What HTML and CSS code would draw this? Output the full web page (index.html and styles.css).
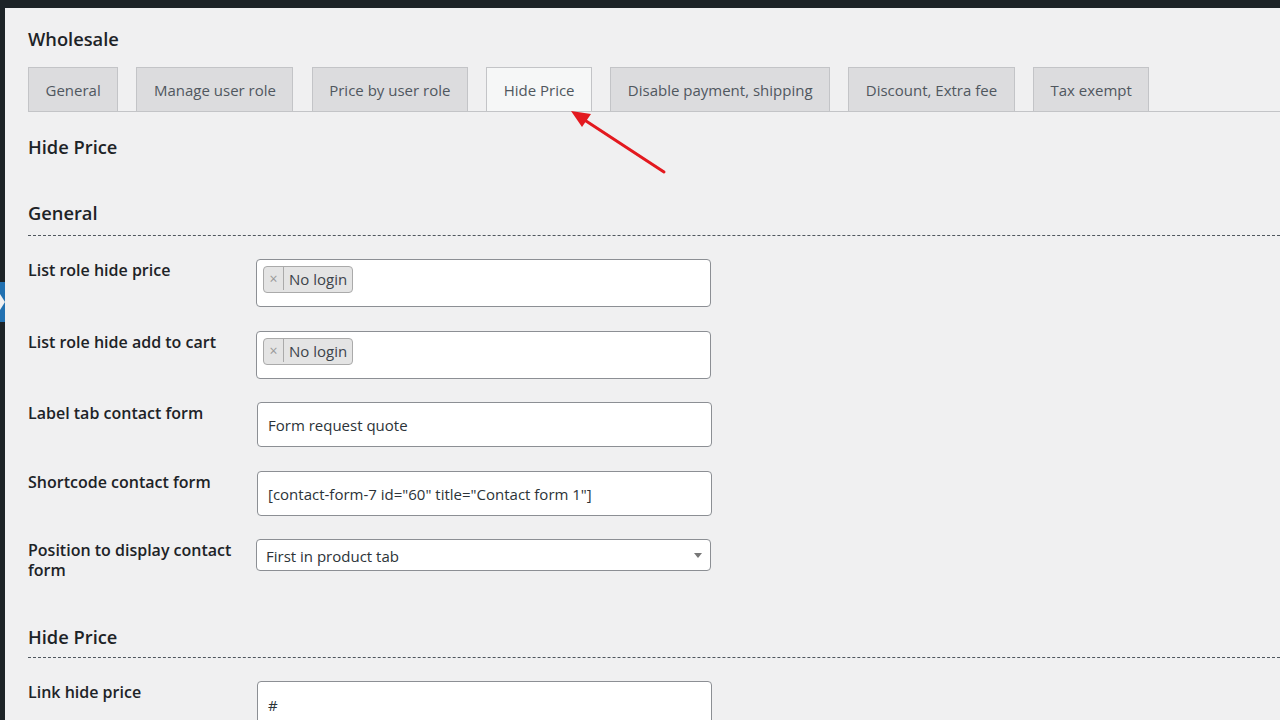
FILE: index.html
```html
<!DOCTYPE html>
<html>
<head>
<meta charset="utf-8">
<link rel="stylesheet" href="styles.css">
</head>
<body>
<div class="topbar"></div>
<div class="layout">
  <div class="sidebar">
    <div class="side-dark side-top"></div>
    <div class="side-current"><span class="notch"></span></div>
    <div class="side-dark side-rest"></div>
  </div>
  <main class="main">
    <h1 class="page-title">Wholesale</h1>
    <nav class="tabs">
      <a class="tab">General</a>
      <a class="tab">Manage user role</a>
      <a class="tab">Price by user role</a>
      <a class="tab tab-active">Hide Price</a>
      <a class="tab">Disable payment, shipping</a>
      <a class="tab">Discount, Extra fee</a>
      <a class="tab">Tax exempt</a>
    </nav>
    <h2 class="section-title">Hide Price</h2>

    <h3 class="group-title">General</h3>
    <div class="row">
      <div class="label">List role hide price</div>
      <div class="tagbox"><span class="chip"><span class="chip-x">×</span><span class="chip-text">No login</span></span></div>
    </div>
    <div class="row">
      <div class="label">List role hide add to cart</div>
      <div class="tagbox"><span class="chip"><span class="chip-x">×</span><span class="chip-text">No login</span></span></div>
    </div>
    <div class="row row-tight">
      <div class="label">Label tab contact form</div>
      <div class="textbox">Form request quote</div>
    </div>
    <div class="row">
      <div class="label">Shortcode contact form</div>
      <div class="textbox">[contact-form-7 id="60" title="Contact form 1"]</div>
    </div>
    <div class="row row-tight">
      <div class="label">Position to display contact form</div>
      <div class="selectbox"><span>First in product tab</span><span class="caret"></span></div>
    </div>

    <h3 class="group-title group-second">Hide Price</h3>
    <div class="row">
      <div class="label">Link hide price</div>
      <div class="textbox textbox-hash">#</div>
    </div>
  </main>
</div>
<svg class="arrow" width="120" height="80" viewBox="0 0 120 80">
  <line x1="111" y1="69" x2="30" y2="16" stroke="#e3191f" stroke-width="3" stroke-linecap="round"/>
  <polygon points="18,8 38,11 29,24" fill="#e3191f"/>
</svg>
</body>
</html>
```
FILE: styles.css
```css
html, body {
  margin: 0;
  padding: 0;
  background: #f0f0f1;
  font-family: "Open Sans", "Noto Sans", sans-serif;
  color: #1d2327;
  overflow: hidden;
}
.topbar {
  height: 8px;
  background: #1d2327;
}
.layout {
  display: flex;
  min-height: 712px;
}
.sidebar {
  width: 5px;
  flex: none;
  display: flex;
  flex-direction: column;
}
.side-dark {
  background: #1d2327;
}
.side-top {
  height: 274px;
}
.side-current {
  height: 40px;
  background: #2271b1;
  position: relative;
}
.notch {
  position: absolute;
  left: 0;
  top: 12px;
  width: 0;
  height: 0;
  border-top: 8px solid transparent;
  border-bottom: 8px solid transparent;
  border-left: 5px solid #f0f0f1;
}
.side-rest {
  flex: 1;
}
.main {
  flex: 1;
  padding: 18px 0 0 23px;
}
.page-title {
  margin: 0;
  font-size: 18.3px;
  font-weight: 600;
  line-height: 26px;
  color: #1d2327;
}
.tabs {
  display: flex;
  margin-top: 15px;
  height: 44px;
  border-bottom: 1px solid #c3c4c7;
}
.tab {
  display: flex;
  align-items: center;
  padding: 0 16.5px;
  margin-right: 18.25px;
  border: 1px solid #c3c4c7;
  border-bottom: none;
  background: #dcdcde;
  color: #50575e;
  font-size: 15px;
  box-sizing: border-box;
  height: 44px;
  white-space: nowrap;
}
.tab-active {
  background: #f6f7f7;
}
.section-title {
  margin: 22px 0 0;
  font-size: 18.3px;
  font-weight: 600;
  line-height: 26px;
  color: #1d2327;
}
.group-title {
  margin: 40px 0 0;
  font-size: 18.3px;
  font-weight: 600;
  line-height: 26px;
  padding-bottom: 9px;
  border-bottom: 1px dashed #50575e;
  color: #1d2327;
}
.group-second {
  margin-top: 44px;
  padding-bottom: 7px;
}
.row {
  display: flex;
  align-items: flex-start;
  margin-top: 24px;
}
.row-tight {
  margin-top: 23px;
}
.group-title + .row {
  margin-top: 23px;
}
.label {
  width: 210px;
  margin-right: 18px;
  flex: none;
  font-size: 16px;
  font-weight: 600;
  line-height: 20px;
  padding-top: 1px;
  color: #1d2327;
}
.tagbox {
  width: 455px;
  height: 48px;
  box-sizing: border-box;
  background: #fff;
  border: 1px solid #8c8f94;
  border-radius: 4px;
  padding: 6px 6px;
}
.chip {
  display: inline-flex;
  align-items: center;
  height: 27px;
  box-sizing: border-box;
  background: #e4e4e4;
  border: 1px solid #aaa;
  border-radius: 4px;
  color: #3c434a;
  font-size: 15px;
  padding-bottom: 2px;
}
.chip-x {
  width: 19px;
  text-align: center;
  color: #999;
  font-size: 14px;
  border-right: 1px solid #aaa;
  line-height: 23px;
}
.chip-text {
  padding: 0 5px 0 5px;
}
.textbox {
  width: 455px;
  height: 45px;
  box-sizing: border-box;
  background: #fff;
  border: 1px solid #8c8f94;
  border-radius: 4px;
  padding: 0 10px;
  display: flex;
  align-items: center;
  font-size: 15px;
  color: #2c3338;
  margin-left: 1px;
}
.textbox-hash {
  padding-top: 3px;
}
.selectbox {
  width: 455px;
  height: 32px;
  box-sizing: border-box;
  background: #fff;
  border: 1px solid #8c8f94;
  border-radius: 4px;
  padding: 1px 8px 0 9px;
  display: flex;
  align-items: center;
  justify-content: space-between;
  font-size: 15px;
  color: #2c3338;
}
.caret {
  width: 0;
  height: 0;
  border-left: 4.5px solid transparent;
  border-right: 4.5px solid transparent;
  border-top: 5px solid #777;
  margin-top: -1px;
}
.arrow {
  position: absolute;
  left: 553px;
  top: 103px;
}
```
